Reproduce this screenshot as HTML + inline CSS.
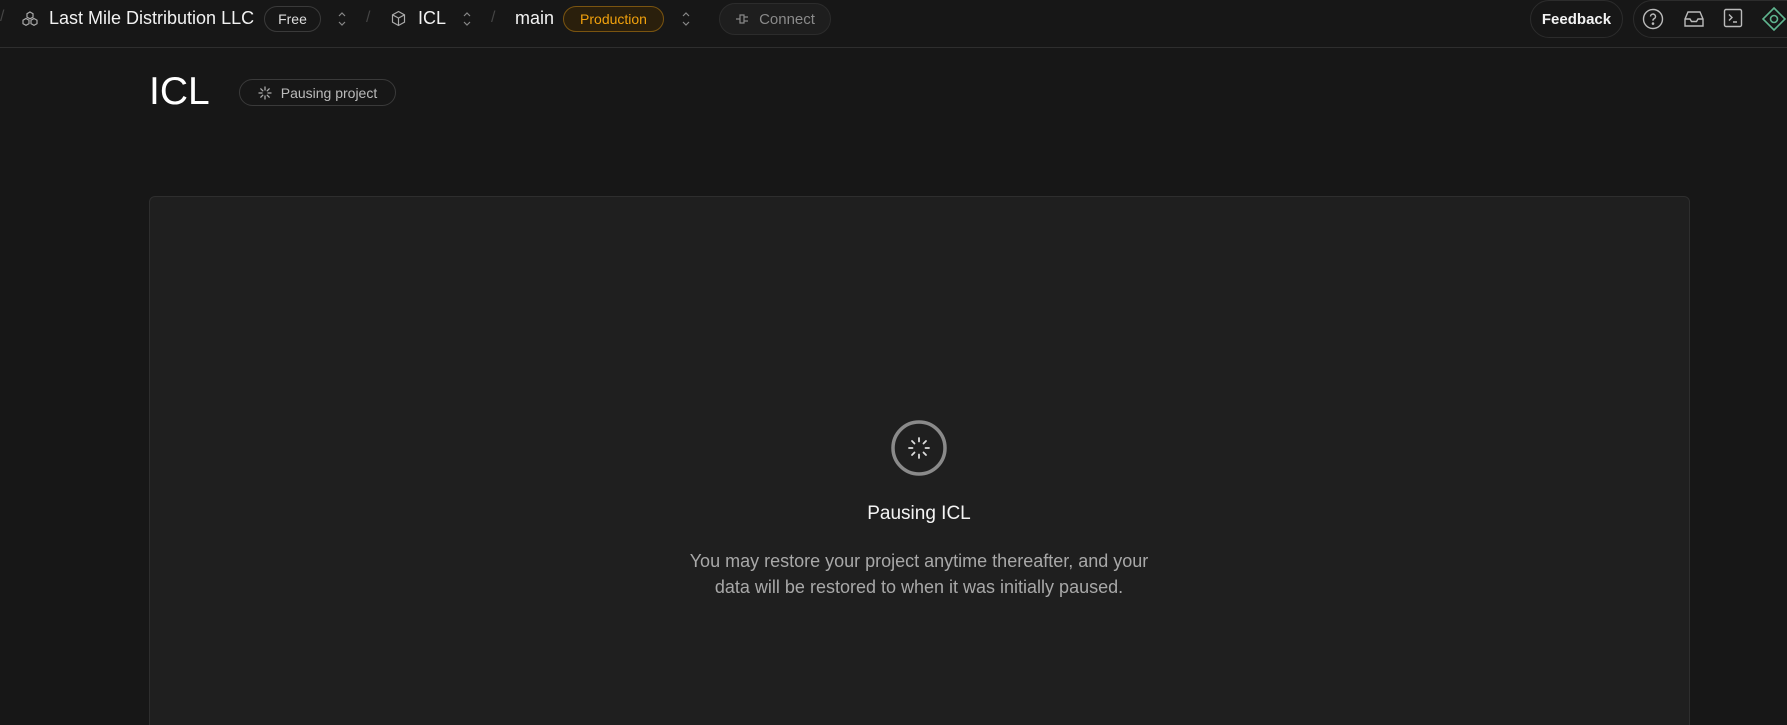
<!DOCTYPE html>
<html style="overflow:hidden;width:1787px;height:725px"><head><meta charset="utf-8"><style>
*{box-sizing:border-box;margin:0;padding:0}
body{width:1787px;height:725px;overflow:hidden;background:#171717;font-family:"Liberation Sans",sans-serif;color:#ededed;position:relative}
.a{position:absolute}
.top{left:0;top:0;width:1787px;height:48px;border-bottom:1px solid #2e2e2e}
.t{font-size:18px;line-height:20px;color:#f2f2f2}
.pill{border:1px solid #3a3a3a;border-radius:14px;font-size:14px;display:flex;align-items:center;justify-content:center}
.sl{color:#444;font-size:16px}
</style></head><body>
<div class="a top"></div>
<div class="a sl" style="left:0;top:8px">/</div>
<svg class="a" style="left:21px;top:10px" width="18" height="18" viewBox="0 0 18 18" fill="none" stroke="#aaa" stroke-width="1.2"><path d="M9 2l3 1.7v3.4L9 8.8 6 7.1V3.7z M5 8.5l3 1.7v3.4L5 15.3 2 13.6v-3.4z M13 8.5l3 1.7v3.4l-3 1.7-3-1.7v-3.4z"/></svg>
<div class="a t" style="left:49px;top:8px">Last Mile Distribution LLC</div>
<div class="a pill" style="left:264px;top:6px;width:57px;height:26px;color:#ddd">Free</div>
<svg class="a" style="left:337px;top:11px" width="10" height="16" viewBox="0 0 10 16" fill="none" stroke="#888" stroke-width="1.2"><path d="M2 5l3-3 3 3M2 11l3 3 3-3"/></svg>
<div class="a sl" style="left:366px;top:9px">/</div>
<svg class="a" style="left:390px;top:10px" width="17" height="17" viewBox="0 0 17 17" fill="none" stroke="#aaa" stroke-width="1.2"><path d="M8.5 1.5l6 3.3v7.4l-6 3.3-6-3.3V4.8z M2.5 4.8l6 3.3 6-3.3 M8.5 8.1v7.4"/></svg>
<div class="a t" style="left:418px;top:8px">ICL</div>
<svg class="a" style="left:462px;top:11px" width="10" height="16" viewBox="0 0 10 16" fill="none" stroke="#888" stroke-width="1.2"><path d="M2 5l3-3 3 3M2 11l3 3 3-3"/></svg>
<div class="a sl" style="left:491px;top:9px">/</div>
<div class="a t" style="left:515px;top:8px">main</div>
<div class="a pill" style="left:563px;top:6px;width:101px;height:26px;color:#f1a10d;border-color:#7a5410;background:#2a1f0c">Production</div>
<svg class="a" style="left:681px;top:11px" width="10" height="16" viewBox="0 0 10 16" fill="none" stroke="#888" stroke-width="1.2"><path d="M2 5l3-3 3 3M2 11l3 3 3-3"/></svg>
<div class="a pill" style="left:719px;top:3px;width:112px;height:32px;border-radius:16px;border-color:#2c2c2c;background:#1e1e1e;color:#8a8a8a;font-size:15px"><svg width="16" height="12" viewBox="0 0 16 12" fill="none" stroke="#888" stroke-width="1.2" style="margin-right:8px"><path d="M1 6h4M5 2h4v8H5zM9 4h4M9 8h4"/></svg>Connect</div>
<div class="a pill" style="left:1530px;top:0px;width:93px;height:38px;border-radius:19px;border-color:#2c2c2c;font-size:15px;color:#f2f2f2;font-weight:bold">Feedback</div>
<div class="a pill" style="left:1633px;top:0px;width:180px;height:38px;border-radius:19px;border-color:#2c2c2c"></div>
<svg class="a" style="left:1642px;top:8px" width="22" height="22" viewBox="0 0 22 22" fill="none" stroke="#bbb" stroke-width="1.4"><circle cx="11" cy="11" r="9.5"/><path d="M8.5 8.5a2.5 2.5 0 1 1 3.5 2.3c-.7.3-1 .8-1 1.5v.5"/><circle cx="11" cy="15.6" r=".6" fill="#bbb"/></svg>
<svg class="a" style="left:1683px;top:9px" width="22" height="20" viewBox="0 0 22 20" fill="none" stroke="#bbb" stroke-width="1.4"><path d="M2 10l3-7h12l3 7v7H2z M2 10h5l1.5 2.5h5L15 10h5"/></svg>
<svg class="a" style="left:1723px;top:8px" width="20" height="20" viewBox="0 0 20 20" fill="none" stroke="#bbb" stroke-width="1.4"><rect x="1.5" y="1.5" width="17" height="17" rx="1.5"/><path d="M6 6.5l3 3-3 3 M10 14h4"/></svg>
<svg class="a" style="left:1761px;top:6px" width="26" height="26" viewBox="0 0 26 26" fill="none" stroke="#5fb58f" stroke-width="1.6"><path d="M13 2l11 11-11 11L2 13z"/><circle cx="13" cy="13" r="3.5"/></svg>
<div class="a" style="left:149px;top:71px;font-size:39px;line-height:42px;color:#fff">ICL</div>
<div class="a pill" style="left:239px;top:79px;width:157px;height:27px;color:#bbb;font-size:14px"><svg width="14" height="14" viewBox="0 0 14 14" stroke="#aaa" stroke-width="1.3" stroke-linecap="round" style="margin-right:9px"><path d="M7 1v3M7 10v3M1 7h3M10 7h3M2.8 2.8l2 2M9.2 9.2l2 2M2.8 11.2l2-2M9.2 4.8l2-2"/></svg>Pausing project</div>
<div class="a" style="left:149px;top:196px;width:1541px;height:536px;background:#1f1f1f;border:1px solid #2e2e2e;border-radius:6px"></div>
<svg class="a" style="left:890px;top:419px" width="58" height="58" viewBox="0 0 58 58"><circle cx="29" cy="29" r="26" fill="none" stroke="#8a8a8a" stroke-width="3.5"/><g stroke="#ddd" stroke-width="1.8" stroke-linecap="round"><path d="M29 19v3.5M29 35.5v3.5M19 29h3.5M35.5 29h3.5M22 22l2.5 2.5M33.5 33.5l2.5 2.5M22 36l2.5-2.5M33.5 24.5l2.5-2.5"/></g></svg>
<div class="a" style="left:0;width:1838px;top:503px;text-align:center;font-size:19px;color:#f4f4f4">Pausing ICL</div>
<div class="a" style="left:0;width:1838px;top:548px;text-align:center;font-size:18px;line-height:26px;color:#a8a8a8">You may restore your project anytime thereafter, and your<br>data will be restored to when it was initially paused.</div>
</body></html>
